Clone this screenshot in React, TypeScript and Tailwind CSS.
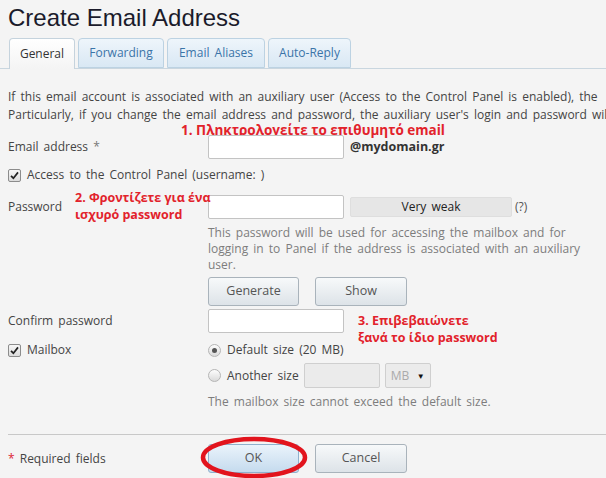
import React from "react";

const F = { fontFamily: "'Open Sans', 'Noto Sans', sans-serif" };

function Check() {
  return (
    <span className="inline-flex w-[13px] h-[13px] items-center justify-center rounded-[2px] border border-[#8c8c8c] bg-gradient-to-b from-[#f7f7f7] to-[#dcdcdc]">
      <svg width="9" height="9" viewBox="0 0 9 9">
        <path d="M1 4.8 L3.4 7.2 L8 1.4" fill="none" stroke="#222" strokeWidth="1.7" />
      </svg>
    </span>
  );
}

function Radio({ on }: { on?: boolean }) {
  return (
    <span className="inline-flex w-[13px] h-[13px] items-center justify-center rounded-full border border-[#b5b5b5] bg-gradient-to-b from-[#fdfdfd] to-[#dadada]">
      {on && <span className="w-[5px] h-[5px] rounded-full bg-[#555]" />}
    </span>
  );
}

function Btn({ label, w, blue }: { label: string; w: string; blue?: boolean }) {
  return (
    <div
      className={`${w} h-[29px] flex items-center justify-center rounded-[3px] border text-[12.5px] text-[#555] ${
        blue
          ? "border-[#8fb0cd] bg-gradient-to-b from-[#eaf3fb] to-[#c5dbee]"
          : "border-[#a9b3bb] bg-gradient-to-b from-[#f7f9fa] to-[#dde3e8]"
      }`}
    >
      {label}
    </div>
  );
}

function Input({ w }: { w: string }) {
  return <div className={`${w} h-[24px] bg-white border border-[#c3c3c3] rounded-[2px]`} />;
}

const red = "text-[#e2222b] font-bold text-[12.5px] leading-[17px] whitespace-nowrap [word-spacing:0px]";

export default function App() {
  return (
    <div style={F} className="relative w-[606px] h-[478px] overflow-hidden bg-[#f4f4f4] pl-2 text-[#444] text-[12px] [word-spacing:2px]">
      <div
        style={{ fontFamily: "'Liberation Sans', Arial, sans-serif" }}
        className="pt-[4px] text-[24px] leading-[28px] text-[#1b1b2b] [word-spacing:0px]"
      >
        Create Email Address
      </div>

      {/* tabs */}
      <div className="mt-[6px] -ml-2 pl-[9px] flex gap-[3px] h-[31px] border-b border-[#c9d6df] w-[606px]">
        <div className="w-[66px] h-[31px] rounded-t-[4px] border border-b-0 border-[#c5d3dd] bg-gradient-to-b from-[#ffffff] to-[#f4f4f4] flex items-center justify-center text-[#333]">
          General
        </div>
        {[
          ["Forwarding", "w-[86px]"],
          ["Email Aliases", "w-[98px]"],
          ["Auto-Reply", "w-[83px]"],
        ].map(([t, w]) => (
          <div
            key={t}
            className={`${w} h-[30px] rounded-t-[4px] border border-[#bcd2e2] bg-gradient-to-b from-[#eef5fb] to-[#d9e8f4] flex items-center justify-center text-[#3b74a8]`}
          >
            {t}
          </div>
        ))}
      </div>

      {/* intro */}
      <div className="mt-[19px] leading-[18px] whitespace-nowrap text-[#444]">
        <div>If this email account is associated with an auxiliary user (Access to the Control Panel is enabled), the</div>
        <div>Particularly, if you change the email address and password, the auxiliary user's login and password will</div>
      </div>
      <div className={`${red} text-[13.5px] -mt-[2px] h-[12px] leading-[12px] pl-[173px]`}>1. Πληκτρολογείτε το επιθυμητό email</div>

      {/* email */}
      <div className="mt-px flex items-center h-[24px]">
        <div className="w-[200px]">
          Email address <span className="text-[#777]">*</span>
        </div>
        <Input w="w-[136px]" />
        <div className="ml-[6px] font-bold text-[12.5px] text-[#333] [word-spacing:0px]">@mydomain.gr</div>
      </div>

      {/* access cp */}
      <div className="mt-[6px] h-[20px] flex items-center gap-[6px]">
        <Check />
        <span>Access to the Control Panel (username: )</span>
      </div>

      {/* password */}
      <div className="mt-[10px] flex items-start">
        <div className="w-[200px] relative h-[24px] flex items-center">
          Password
          <div className={`${red} absolute left-[67px] top-[-6px]`}>
            2. Φροντίζετε για ένα
            <br />
            ισχυρό password
          </div>
        </div>
        <Input w="w-[136px]" />
        <div className="ml-[6px] mt-[2px] w-[162px] h-[20px] rounded-[2px] bg-[#e6e6e6] border border-[#dedede] flex items-center justify-center text-[#222]">
          Very weak
        </div>
        <div className="ml-[3px] h-[24px] flex items-center text-[#555]">(?)</div>
      </div>
      <div className="pl-[200px] mt-[6px] leading-[16px] text-[#7d7d7d] whitespace-nowrap">
        This password will be used for accessing the mailbox and for
        <br />
        logging in to Panel if the address is associated with an auxiliary
        <br />
        user.
      </div>
      <div className="pl-[200px] mt-[4px] flex gap-[16px]">
        <Btn label="Generate" w="w-[91px]" />
        <Btn label="Show" w="w-[92px]" />
      </div>

      {/* confirm */}
      <div className="mt-[3px] flex items-center h-[24px]">
        <div className="w-[200px] h-[24px] flex items-center">Confirm password</div>
        <Input w="w-[136px]" />
        <div className="relative self-stretch">
          <div className={`${red} absolute left-[14px] top-[3px]`}>
            3. Επιβεβαιώνετε
            <br />
            ξανά το ίδιο password
          </div>
        </div>
      </div>

      {/* mailbox */}
      <div className="mt-[7px] h-[20px] flex items-center">
        <div className="w-[200px] flex items-center gap-[6px]">
          <Check />
          <span>Mailbox</span>
        </div>
        <Radio on />
        <span className="ml-[6px]">Default size (20 MB)</span>
      </div>
      <div className="mt-[3px] pl-[200px] flex items-center h-[25px]">
        <Radio />
        <span className="ml-[6px]">Another size</span>
        <div className="ml-[5px] w-[76px] h-[25px] bg-[#ebebeb] border border-[#cfcfcf] rounded-[2px]" />
        <div className="ml-[5px] w-[46px] h-[25px] bg-[#ebebeb] border border-[#cfcfcf] rounded-[2px] flex items-center justify-between px-[5px]">
          <span className="text-[#aaa]">MB</span>
          <span className="text-[8px] text-[#111]">▼</span>
        </div>
      </div>
      <div className="pl-[200px] mt-[6px] leading-[16px] text-[#7d7d7d] whitespace-nowrap">
        The mailbox size cannot exceed the default size.
      </div>

      <div className="mt-[24px] h-px bg-[#c8c8c8] w-[600px]" />

      <div className="mt-[9px] flex items-center relative">
        <div className="w-[200px]">
          <span className="text-[#d23]">*</span> Required fields
        </div>
        <Btn label="OK" w="w-[91px]" blue />
        <div className="ml-[16px]">
          <Btn label="Cancel" w="w-[92px]" />
        </div>
        <svg className="absolute left-[192px] top-[-8px]" width="110" height="44" viewBox="0 0 110 44">
          <ellipse cx="54" cy="21.5" rx="51" ry="18.5" fill="none" stroke="#e2141d" strokeWidth="4.5" />
        </svg>
      </div>
    </div>
  );
}
